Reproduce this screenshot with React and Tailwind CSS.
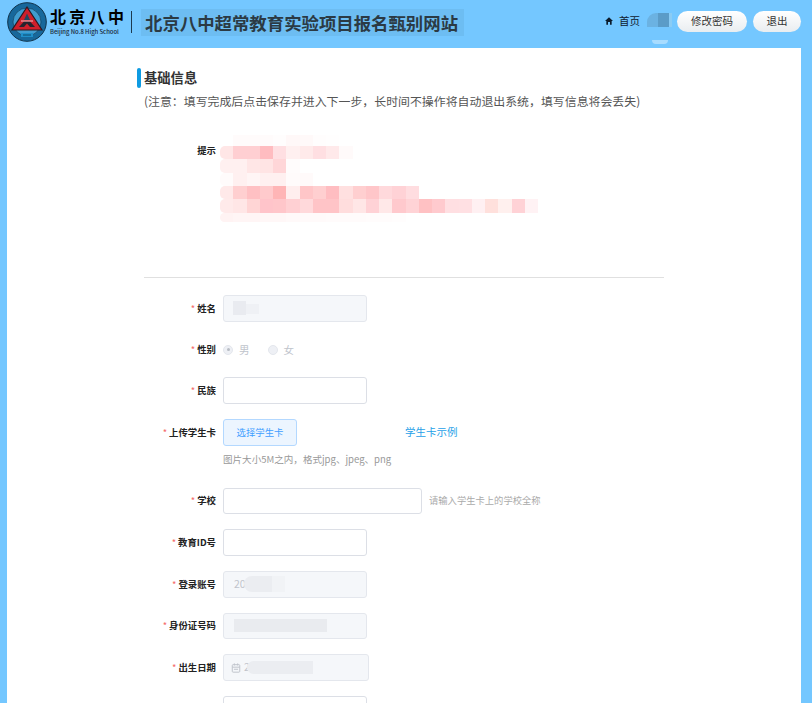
import React from "react";

const F = { fontFamily: '"Noto Sans CJK SC", "Noto Sans", sans-serif' };

const mosaic = [
  { h: "h-[11px]", c: ["", "#fffbfb", "#fffbfb", "#fffbfb", "#fffdfd", "#fff8f8", "#fff9f9", "#fffdfd", "#fffefe"] },
  { h: "h-[13.33px]", c: ["#ffe6e6", "#ffcfd2", "#ffcfd2", "#ffbcc0", "#ffdfe2", "#fff0f0", "#ffeaea", "#ffdfe2", "#ffe9ea", "#fffafa"] },
  { h: "h-[13.33px]", c: ["#fff0f0", "#fff0f0", "#ffe6e6", "#ffe4e4", "#ffd6d8", "#fffcfc"] },
  { h: "h-[13.33px]", c: ["#fffbfb", "#fff0f0", "#fff5f5", "#fff0f0", "#fff0f0", "#fffbfb", "#fffafa"] },
  { h: "h-[13.33px]", c: ["#ffe9e9", "#ffcfd0", "#ffc0c3", "#ffcacc", "#ffb5b6", "#ffeeee", "#ffc6c8", "#ffcfd0", "#ffbdc1", "#ffe0e0", "#ffcfd0", "#ffc6c9", "#ffd9dc", "#ffd2d6", "#ffdde0"] },
  { h: "h-[13.33px]", c: ["#ffeaea", "#ffe6e6", "#ffd5d5", "#ffc4ca", "#ffc6ca", "#ffd0d3", "#ffd9db", "#ffc4c7", "#ffc4c7", "#ffdddd", "#ffe6e6", "#ffd2d6", "#ffe8e8", "#ffc9cd", "#ffd3d6", "#ffc1c3", "#ffcace", "#ffdfe2", "#ffe0e3", "#fff0f2", "#ffe0dc", "#fff0ee", "#ffd2d6", "#fff2f4"] },
  { h: "h-[9px]", c: ["#fff3f3", "#fff5f5", "#fff5f5", "#fff7f7", "#fff7f7", "#fff9f9", "#fffafa", "#fffafa", "#fffbfb", "#fffbfb", "#fffbfb", "#fffcfc", "#fffcfc", "#fffdfd"] },
];

function Label({ children }) {
  return (
    <div className="w-[79px] shrink-0 h-[26.67px] flex items-center justify-end text-[9.4px] font-bold text-[#222] leading-none whitespace-nowrap">
      <span className="text-[#f56c6c] font-normal mr-[2px]">*</span>
      {children}
    </div>
  );
}

function Box({ disabled, w = "w-[144px]", children }) {
  return (
    <div
      className={`${w} h-[26.67px] rounded-[3px] border flex items-center overflow-hidden ${
        disabled ? "bg-[#f5f7fa] border-[#e4e7ed]" : "bg-white border-[#dcdfe6]"
      }`}
    >
      {children}
    </div>
  );
}

function Row({ label, children, mb = "mb-[15px]" }) {
  return (
    <div className={`flex items-start gap-[7px] ${mb}`}>
      <Label>{label}</Label>
      {children}
    </div>
  );
}

function Radio({ text, checked }) {
  return (
    <div className="flex items-center gap-[6px]">
      <span className="w-[10px] h-[10px] rounded-full bg-[#eef0f5] border border-[#e4e7ed] flex items-center justify-center">
        {checked && <span className="w-[3px] h-[3px] rounded-full bg-[#b8bcc4]" />}
      </span>
      <span className="text-[10.5px] text-[#c0c4cc] leading-none">{text}</span>
    </div>
  );
}

function Logo() {
  return (
    <svg width="40" height="40" viewBox="0 0 40 40" className="shrink-0">
      <circle cx="20" cy="20" r="19.3" fill="#17689b" stroke="#10324a" strokeWidth="1" />
      <circle cx="20" cy="20" r="14" fill="#3f9ccf" stroke="#10324a" strokeWidth="0.6" />
      <path d="M20 5 L35 28 L5 28 Z" fill="#cf1f2b" stroke="#2a1a22" strokeWidth="1.2" />
      <path d="M20 11.5 L23 18 L17 18 Z" fill="#24465e" />
      <path d="M12 25 L17 19.5 L23 19.5 L28 25 L23 25 L20 21.5 L17 25 Z" fill="#24242e" />
      <path d="M14 19 H26" stroke="#f4e9e9" strokeWidth="0.8" />
      <path d="M14 31 H26 V35 H14 Z" fill="#1f8fc9" />
      <path d="M16 33 H24" stroke="#0f4a6c" strokeWidth="1" />
    </svg>
  );
}

export default function App() {
  return (
    <div style={F} className="w-[812px] h-[703px] overflow-hidden bg-[#74c7ff]">
      <header className="h-[48px] flex items-start">
        <div className="ml-[7px] mt-[2px]">
          <Logo />
        </div>
        <div className="ml-[3px] mt-[5px] w-[74px] flex flex-col">
          <div className="h-[22px] flex items-center justify-between text-[16px] font-bold text-black leading-none">
            <span>北</span><span>京</span><span>八</span><span>中</span>
          </div>
          <div className="mt-[2px] text-[5.9px] font-medium text-[#1a2a3a] leading-none whitespace-nowrap">
            Beijing No.8 High School
          </div>
        </div>
        <div className="ml-[7px] mt-[11px] w-px h-[22px] bg-[#1c3a50]" />
        <div className="ml-[9px] mt-[9px] w-[323px] h-[27px] bg-[#6dbdf2] flex items-center pl-[4px] text-[17.4px] font-bold text-[#2b3a44] leading-none whitespace-nowrap">
          北京八中超常教育实验项目报名甄别网站
        </div>
        <div className="ml-auto flex items-start pr-[11px]">
          <svg width="8" height="8" viewBox="0 0 24 24" className="mt-[17px] mr-[6px]" fill="#0b1b2b">
            <path d="M12 1 L24 12 H20 V23 H15 V15 H9 V23 H4 V12 H0 Z" />
          </svg>
          <span className="mt-[14px] text-[10.5px] text-[#102030] leading-[14px]">首页</span>
          <div className="ml-[7px] mt-[13px] w-[25px] flex flex-col items-center">
            <div className="flex h-[14px] w-full">
              <div className="w-[11px] rounded-tl-[9px] bg-[#6bb2e2]" />
              <div className="w-[11px] bg-[#5b9cc8]" />
              <div className="w-[3px] bg-[#8accf5]" />
            </div>
            <div className="mt-[13px] w-[16px] h-[4px] rounded-b-full bg-[#a8dcff]" />
          </div>
          <button className="ml-[5px] mt-[11px] w-[70px] h-[21px] rounded-full bg-gradient-to-b from-white to-[#e9edf0] text-[10.5px] text-[#333] leading-none">
            修改密码
          </button>
          <button className="ml-[6px] mt-[11px] w-[48px] h-[21px] rounded-full bg-gradient-to-b from-white to-[#e9edf0] text-[10.5px] text-[#333] leading-none">
            退出
          </button>
        </div>
      </header>

      <main className="ml-[7px] w-[794px] h-[655px] bg-white pt-[20px] pl-[130px]">
        <div className="flex items-center h-[20px]">
          <span className="w-[4px] h-[20px] rounded-[2px] bg-[#0e9be2]" />
          <span className="ml-[3px] text-[13.3px] font-bold text-[#333] leading-none">基础信息</span>
        </div>
        <p className="ml-[7px] mt-[4px] h-[18px] text-[11.92px] leading-[18px] text-[#555] whitespace-nowrap">
          (注意：填写完成后点击保存并进入下一步，长时间不操作将自动退出系统，填写信息将会丢失)
        </p>

        <div className="mt-[25px] h-[142px] flex items-start">
          <div className="w-[79px] mt-[9px] text-right text-[9.4px] font-bold text-[#222] leading-[12px]">提示</div>
          <div className="ml-[4px] flex flex-col">
            {mosaic.map((r, i) => (
              <div key={i} className={`flex ${r.h}`}>
                {r.c.map((c, j) => (
                  <div key={j} className={`w-[13.25px] h-full ${j === 0 ? "rounded-l-[5px]" : ""}`} style={{ backgroundColor: c || "transparent" }} />
                ))}
              </div>
            ))}
          </div>
        </div>

        <div className="ml-[7px] w-[520px] h-px bg-[#e0e0e0]" />

        <div className="mt-[17px]">
          <Row label="姓名">
            <Box disabled>
              <div className="ml-[9px] flex h-[14px]">
                <div className="w-[13px] h-full bg-[#e9ebf0]" />
                <div className="w-[13px] h-[10px] mt-[3px] bg-[#eff1f5]" />
              </div>
            </Box>
          </Row>
          <Row label="性别" mb="mb-[14px]">
            <div className="flex items-center h-[26.67px] gap-[18px]">
              <Radio text="男" checked />
              <Radio text="女" />
            </div>
          </Row>
          <Row label="民族">
            <Box />
          </Row>
          <div className="flex items-start gap-[7px] mb-[15px]">
            <Label>上传学生卡</Label>
            <div className="w-[235px]">
              <div className="flex items-center">
                <button className="w-[74px] h-[26.67px] rounded-[3px] bg-[#ecf5ff] border border-[#b3d8ff] text-[#409eff] text-[9.4px] leading-none">
                  选择学生卡
                </button>
                <span className="ml-[108px] text-[10.5px] text-[#1e9fe8] leading-none whitespace-nowrap">学生卡示例</span>
              </div>
              <div className="mt-[5px] h-[22px] text-[9.55px] leading-[16px] text-[#999] whitespace-nowrap">
                图片大小5M之内，格式jpg、jpeg、png
              </div>
            </div>
          </div>
          <Row label="学校">
            <Box w="w-[199px]" />
            <span className="h-[26.67px] flex items-center text-[9.3px] text-[#aaa] whitespace-nowrap">请输入学生卡上的学校全称</span>
          </Row>
          <Row label="教育ID号">
            <Box />
          </Row>
          <Row label="登录账号">
            <Box disabled>
              <span className="ml-[10px] text-[10.5px] text-[#c0c4cc] leading-none">20</span>
              <div className="-ml-[2px] w-[28px] h-[16px] rounded-l-full bg-[#ebedf1]" />
              <div className="w-[13px] h-[16px] bg-[#f1f3f6]" />
            </Box>
          </Row>
          <Row label="身份证号码">
            <Box disabled>
              <div className="ml-[10px] w-[93px] h-[13px] bg-[#e9ebef]" />
            </Box>
          </Row>
          <Row label="出生日期">
            <Box disabled w="w-[146px]">
              <svg width="10" height="10" viewBox="0 0 24 24" className="ml-[7px]" fill="none" stroke="#c0c4cc" strokeWidth="2.4">
                <rect x="3" y="4" width="18" height="18" rx="2" />
                <path d="M3 10 H21 M8 1 V6 M16 1 V6 M7 15 H17" />
              </svg>
              <span className="ml-[3px] text-[10.5px] text-[#c0c4cc] leading-none">2</span>
              <div className="-ml-[3px] w-[66px] h-[13px] rounded-l-full bg-[#ebedf1]" />
            </Box>
          </Row>
          <div className="ml-[86px]">
            <Box />
          </div>
        </div>
      </main>
    </div>
  );
}
